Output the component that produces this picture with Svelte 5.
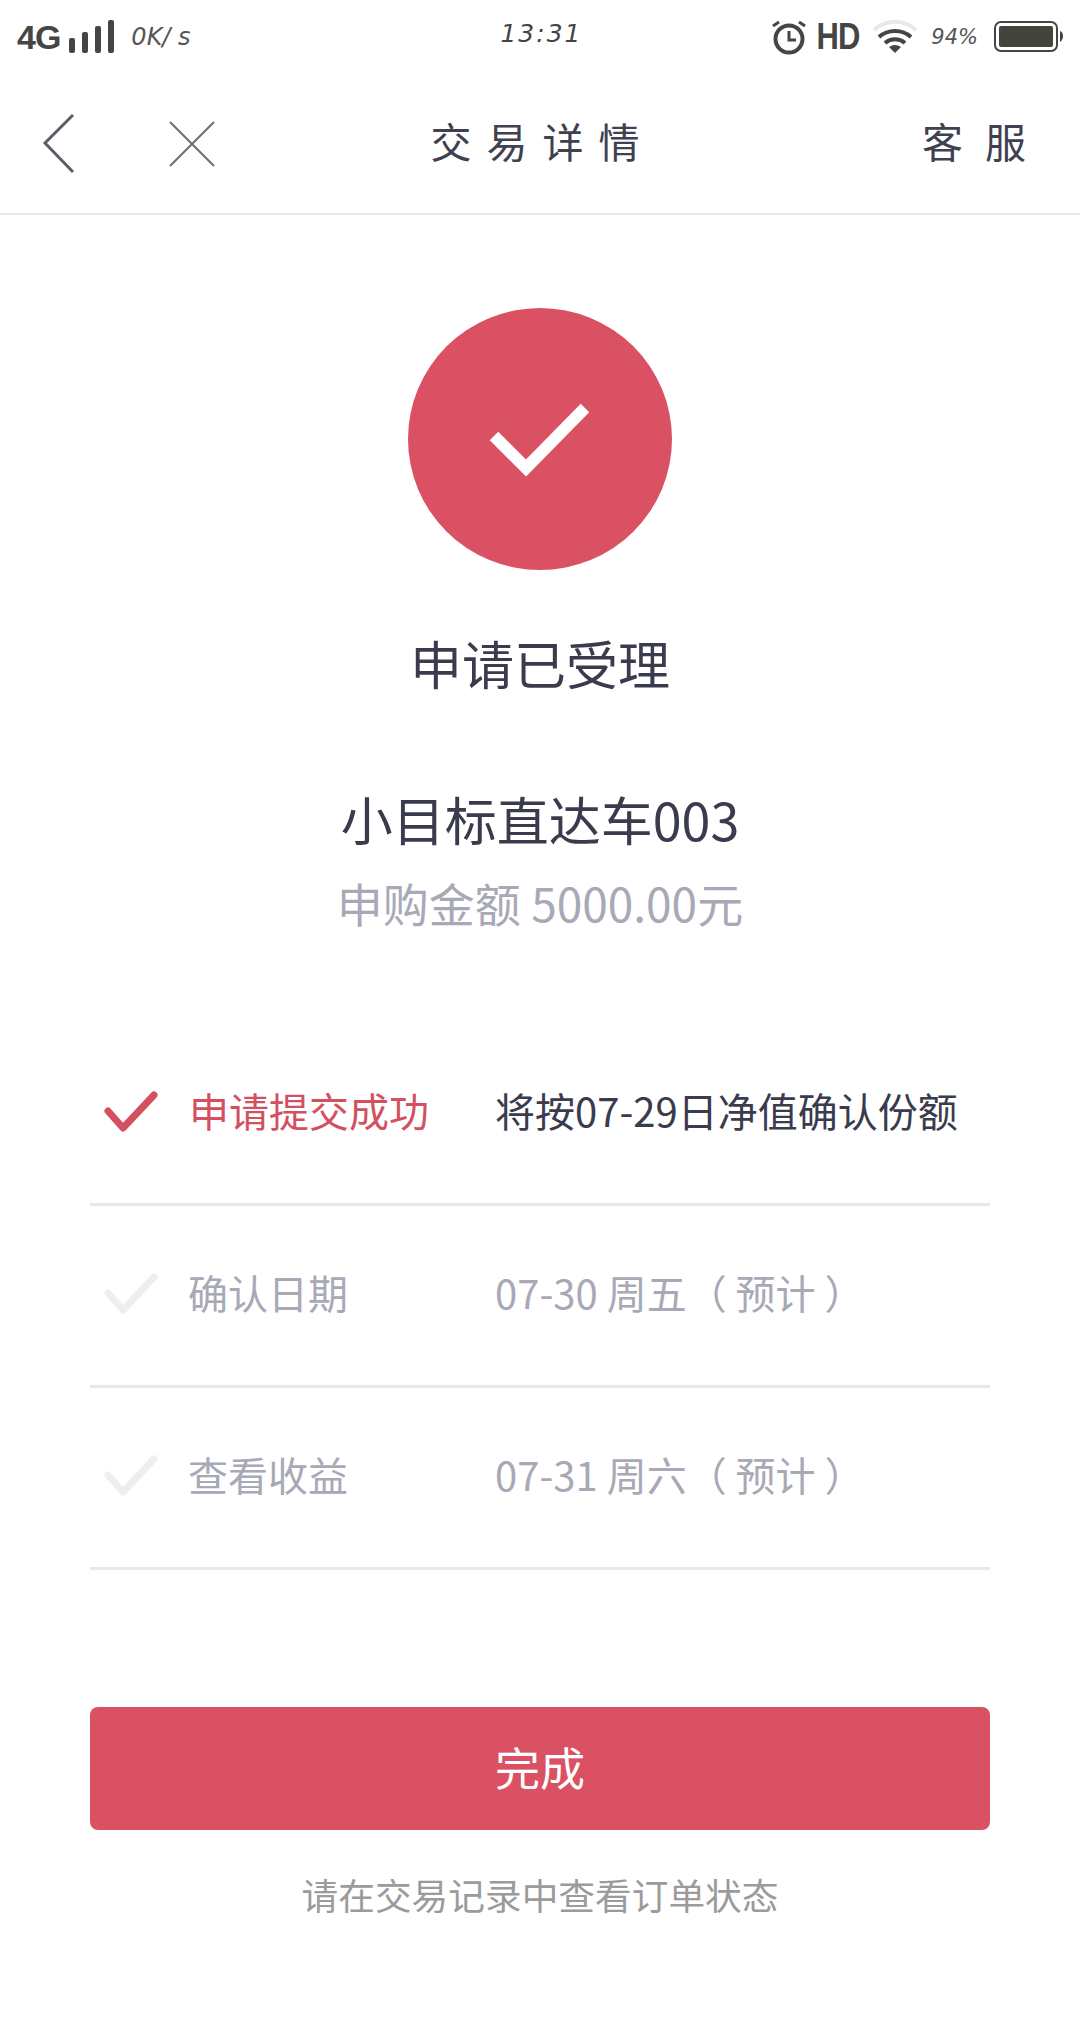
<script>
  const steps = [
    { label: '申请提交成功', note: '将按07-29日净值确认份额', done: true },
    { label: '确认日期', note: '07-30 周五（ 预计 ）', done: false },
    { label: '查看收益', note: '07-31 周六（ 预计 ）', done: false }
  ];
</script>

<div class="page">
  <!-- Status bar -->
  <div class="status">
    <div class="status-left">
      <span class="net">4G</span>
      <svg class="bars" width="46" height="34" viewBox="0 0 46 34" fill="#454545">
        <rect x="0" y="18" width="6" height="15" rx="2" />
        <rect x="13" y="12" width="6" height="21" rx="2" />
        <rect x="26" y="6" width="6" height="27" rx="2" />
        <rect x="39" y="0" width="6" height="33" rx="2" />
      </svg>
      <span class="speed">0K/ s</span>
    </div>
    <span class="clock">13:31</span>
    <div class="status-right">
      <svg width="36" height="36" viewBox="0 0 36 36" fill="none" stroke="#454545">
        <circle cx="18" cy="20" r="13.5" stroke-width="4" />
        <path d="M18 12v9h7" stroke-width="3" />
        <path d="M2 7l6-4M34 7l-6-4" stroke-width="3" />
      </svg>
      <span class="hd">HD</span>
      <svg width="44" height="34" viewBox="0 0 44 34">
        <path d="M1 10C13-1 31-1 43 10" fill="none" stroke="#e8e8e8" stroke-width="4" />
        <path d="M6 17C15 9 29 9 38 17" fill="none" stroke="#454545" stroke-width="4" />
        <path d="M12 23C18 18 26 18 32 23" fill="none" stroke="#454545" stroke-width="4" />
        <path d="M16 27Q22 23 28 27L22 33Z" fill="#454545" />
      </svg>
      <span class="batt-text">94%</span>
      <svg width="70" height="32" viewBox="0 0 70 32">
        <rect x="1" y="1" width="62" height="29" rx="6" fill="none" stroke="#454545" stroke-width="2" />
        <rect x="5" y="5" width="54" height="21" rx="2" fill="#45443c" />
        <path d="M66 10q3 1 3 5t-3 6z" fill="#454545" />
      </svg>
    </div>
  </div>

  <!-- Nav -->
  <header class="nav">
    <div class="nav-icons">
      <svg width="34" height="62" viewBox="0 0 34 62" fill="none" stroke="#5d5e68" stroke-width="3">
        <path d="M31 2L3 30l28 29" />
      </svg>
      <svg width="48" height="48" viewBox="0 0 48 48" fill="none" stroke="#6c6d77" stroke-width="2">
        <path d="M2 2l44 44M46 2L2 46" />
      </svg>
    </div>
    <h1 class="nav-title">交易详情</h1>
    <span class="nav-service">客服</span>
  </header>

  <!-- Result -->
  <section class="result">
    <div class="circle">
      <svg width="100" height="76" viewBox="0 0 100 76" fill="none" stroke="#fff" stroke-width="12">
        <path d="M5 34l32 32 59-60" />
      </svg>
    </div>
    <h2 class="result-title">申请已受理</h2>
    <p class="product">小目标直达车003</p>
    <p class="amount">申购金额 5000.00元</p>
  </section>

  <!-- Steps -->
  <ul class="steps">
    {#each steps as step}
      <li class="step" class:done={step.done}>
        <svg class="tick" width="54" height="44" viewBox="0 0 54 44" fill="none" stroke-width="7" stroke-linecap="round" stroke-linejoin="round">
          <path d="M4 20l15 17L50 4" />
        </svg>
        <span class="step-label">{step.label}</span>
        <span class="step-note">{step.note}</span>
      </li>
    {/each}
  </ul>

  <button class="finish">完成</button>
  <p class="hint">请在交易记录中查看订单状态</p>
</div>

<style>
  :global(body) {
    margin: 0;
    background: #fff;
  }

  .page {
    width: 1080px;
    height: 2034px;
    background: #fff;
    color: #3a3b4d;
    font-family: "Noto Sans CJK SC", sans-serif;
    overflow: hidden;
  }

  /* Status bar */
  .status {
    height: 74px;
    padding: 0 16px 0 17px;
    display: grid;
    grid-template-columns: 1fr auto 1fr;
    align-items: center;
    color: #454545;
  }

  .status-left,
  .status-right {
    display: flex;
    align-items: center;
  }

  .status-right {
    justify-content: flex-end;
    gap: 8px;
  }

  .net {
    font-family: "Liberation Sans", sans-serif;
    font-weight: 700;
    font-size: 34px;
    letter-spacing: -1px;
    margin-right: 9px;
  }

  .speed,
  .clock,
  .batt-text {
    font-family: "DejaVu Sans", sans-serif;
    font-style: italic;
    font-weight: 200;
  }

  .speed {
    font-size: 24px;
    margin-left: 16px;
    color: #555;
  }

  .clock {
    font-size: 25px;
    letter-spacing: 2px;
    margin-top: -8px;
    margin-right: -2px;
    color: #444;
  }

  .batt-text {
    font-size: 21px;
    color: #555;
    margin: 0 8px 0 6px;
  }

  .hd {
    font-family: "Liberation Sans", sans-serif;
    font-weight: 700;
    font-size: 36px;
    letter-spacing: -1px;
    margin: 0 2px 0 -2px;
    transform: scaleX(0.86);
  }

  /* Nav */
  .nav {
    height: 141px;
    box-sizing: border-box;
    border-bottom: 2px solid #e8e8e8;
    display: grid;
    grid-template-columns: 1fr auto 1fr;
    align-items: center;
    padding: 0 54px 0 42px;
  }

  .nav-icons {
    display: flex;
    align-items: center;
    gap: 92px;
  }

  .nav-title,
  .nav-service {
    font-family: "Noto Sans CJK SC", sans-serif;
    font-weight: 400;
    font-size: 41px;
    letter-spacing: 15px;
    color: #3f4050;
    margin-top: -8px;
  }

  .nav-title {
    margin-bottom: 0;
    margin-left: 17px;
    margin-right: 0;
  }

  .nav-service {
    justify-self: end;
    letter-spacing: 22px;
    margin-right: -22px;
  }

  /* Result */
  .result {
    display: flex;
    flex-direction: column;
    align-items: center;
  }

  .circle {
    width: 264px;
    height: 262px;
    margin-top: 93px;
    border-radius: 50%;
    background: #da5164;
    display: flex;
    align-items: center;
    justify-content: center;
  }

  .circle svg {
    margin: 2px 0 0 -2px;
  }

  .result-title {
    margin: 55px 0 0;
    font-weight: 400;
    font-size: 52px;
    line-height: 76px;
  }

  .product {
    margin: 80px 0 0;
    font-size: 52px;
    line-height: 76px;
  }

  .amount {
    margin: 14px 0 0;
    font-size: 46px;
    line-height: 62px;
    color: #a8a9b6;
  }

  /* Steps */
  .steps {
    list-style: none;
    margin: 91px 90px 0;
    padding: 0;
  }

  .step {
    height: 182px;
    box-sizing: border-box;
    border-bottom: 3px solid #e8e8ec;
    display: flex;
    align-items: center;
    padding: 0 0 7px 14px;
    color: #a8a9b6;
    font-size: 40px;
  }

  .tick {
    stroke: #eeeef0;
    flex: none;
    margin: 6px 30px 0 0;
  }

  .step-label {
    width: 307px;
    flex: none;
  }

  .step.done .tick {
    stroke: #d2505f;
  }

  .step.done .step-label {
    color: #d2505f;
    margin-left: 1px;
    margin-right: -1px;
  }

  .step.done .step-note {
    color: #3a3b4d;
  }

  /* Bottom */
  .finish {
    display: block;
    width: 900px;
    height: 123px;
    margin: 137px auto 0;
    padding-bottom: 6px;
    border: none;
    border-radius: 8px;
    background: #da5164;
    color: #fff;
    font-family: "Noto Sans CJK SC", sans-serif;
    font-size: 45px;
  }

  .hint {
    margin: 37px 0 0;
    text-align: center;
    font-size: 36.7px;
    line-height: 54px;
    color: #9b9b9b;
  }
</style>
